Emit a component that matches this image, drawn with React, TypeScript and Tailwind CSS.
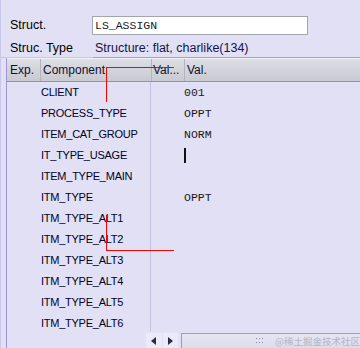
const rows: { name: string; value?: string; cursor?: boolean }[] = [
  { name: "CLIENT", value: "001" },
  { name: "PROCESS_TYPE", value: "OPPT" },
  { name: "ITEM_CAT_GROUP", value: "NORM" },
  { name: "IT_TYPE_USAGE", cursor: true },
  { name: "ITEM_TYPE_MAIN" },
  { name: "ITM_TYPE", value: "OPPT" },
  { name: "ITM_TYPE_ALT1" },
  { name: "ITM_TYPE_ALT2" },
  { name: "ITM_TYPE_ALT3" },
  { name: "ITM_TYPE_ALT4" },
  { name: "ITM_TYPE_ALT5" },
  { name: "ITM_TYPE_ALT6" },
];

export default function App() {
  return (
    <div className="relative w-[360px] h-[348px] overflow-hidden bg-[#e2e0f5] border-l border-[#cbc7ec] font-['Liberation_Sans',Arial,sans-serif] text-[#16163e] flex flex-col">
      {/* Struct. */}
      <div className="flex items-center h-[19px] mt-[16px]">
        <span className="w-[91px] pl-[9px] text-[12.5px] text-black">Struct.</span>
        <div className="w-[216px] h-[19px] bg-white border border-[#a4a4ae] pl-[2px] flex items-center font-['Liberation_Mono',monospace] text-[11.5px] text-[#1a1a1a]">
          LS_ASSIGN
        </div>
      </div>

      {/* Struc. Type */}
      <div className="flex items-center h-[18px] mt-[4px] text-[12.5px]">
        <span className="w-[94px] pl-[9px] text-black">Struc. Type</span>
        <span className="text-[#14144a]">Structure: flat, charlike(134)</span>
      </div>

      {/* frame top */}
      <div className="flex h-px">
        <div className="w-[92px] bg-[#c8c5e0]" />
        <div className="flex-1 bg-[#a39ce2]" />
      </div>

      <div className="flex-1 ml-[5px] border-l border-[#9e97dc] flex flex-col">
        {/* header */}
        <div className="flex h-[24px] border-t border-[#f2f2f8] border-b border-b-[#9494a6] bg-gradient-to-b from-[#dedee5] to-[#c9c9d1] text-[12px] text-[#101030]">
          <div className="w-[34px] pl-[3px] flex items-center border-r border-[#b4b4c0]">Exp.</div>
          <div className="w-[111px] pl-[2px] flex items-center border-r border-[#b4b4c0]">Component</div>
          <div className="w-[33px] pl-[1px] flex items-center border-r border-[#b4b4c0]">Val...</div>
          <div className="flex-1 pl-[2px] flex items-center">Val.</div>
        </div>

        {/* body */}
        <div className="h-[249px] overflow-hidden flex">
          <div className="w-[144px] border-r border-[#c3bfdc] flex flex-col shrink-0">
            {rows.map((r) => (
              <div key={r.name} className="h-[21px] shrink-0 flex items-center pl-[34px] text-[11px] tracking-[-0.25px] text-[#000028]">
                {r.name}
              </div>
            ))}
          </div>
          <div className="flex-1 flex flex-col pl-[33px]">
            {rows.map((r) => (
              <div key={r.name} className="h-[21px] shrink-0 flex items-center font-['Liberation_Mono',monospace] text-[11.5px] text-[#1a1a1a]">
                {r.value}
                {r.cursor && <span className="inline-block w-[2px] h-[15px] bg-[#111]" />}
              </div>
            ))}
          </div>
        </div>

        {/* horizontal scroll */}
        <div className="flex h-[17px] pt-[2px]">
          <div className="w-[145px]" />
          <div className="w-[16px] bg-[#ebeaf8] flex items-center justify-center">
            <svg width="6" height="8" viewBox="0 0 6 8"><path d="M5 0 L0 4 L5 8 Z" fill="#2a2a40" /></svg>
          </div>
          <div className="w-px" />
          <div className="w-[16px] bg-[#ebeaf8] flex items-center justify-center">
            <svg width="6" height="8" viewBox="0 0 6 8"><path d="M1 0 L6 4 L1 8 Z" fill="#2a2a40" /></svg>
          </div>
          <div className="w-[3px]" />
          <div className="flex-1 border-t border-l border-[#9c9cb2] bg-gradient-to-b from-[#e6e6f2] to-[#dcdcec] flex items-center pl-[74px] gap-[12px]">
            <svg width="7" height="6" viewBox="0 0 7 6">
              <rect x="0" y="0" width="1" height="1" fill="#8a8aa0" />
              <rect x="3" y="0" width="1" height="1" fill="#8a8aa0" />
              <rect x="6" y="0" width="1" height="1" fill="#8a8aa0" />
              <rect x="0" y="4" width="1" height="1" fill="#8a8aa0" />
              <rect x="3" y="4" width="1" height="1" fill="#8a8aa0" />
              <rect x="6" y="4" width="1" height="1" fill="#8a8aa0" />
            </svg>
            <span className="text-[9.5px] text-[#b4b4c6] font-['Noto_Sans_CJK_SC',sans-serif] whitespace-nowrap">@稀土掘金技术社区</span>
          </div>
        </div>
      </div>

      {/* red annotation lines */}
      <div className="absolute left-[105px] top-[67px] w-[68px] h-px bg-[#ff0000]" />
      <div className="absolute left-[105px] top-[67px] w-px h-[35px] bg-[#ff0000]" />
      <div className="absolute left-[105px] top-[215px] w-px h-[35px] bg-[#ff0000]" />
      <div className="absolute left-[105px] top-[250px] w-[68px] h-px bg-[#ff0000]" />
    </div>
  );
}
